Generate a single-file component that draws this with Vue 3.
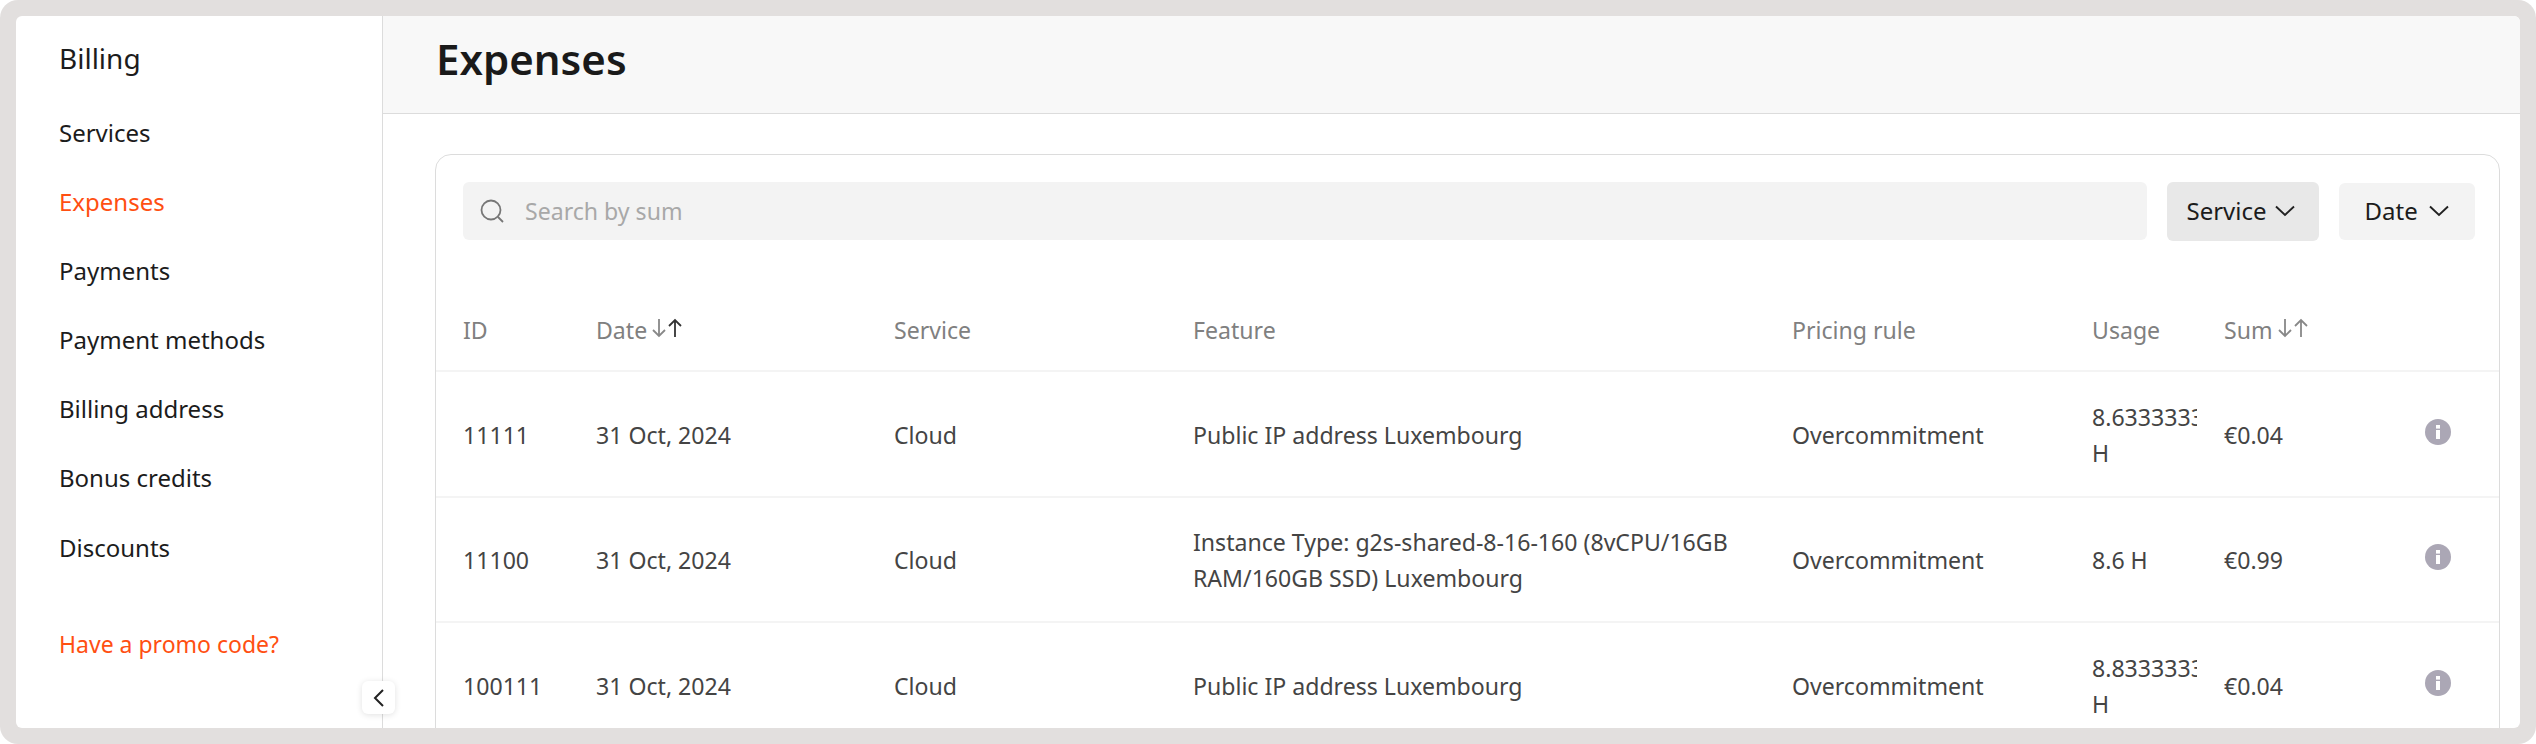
<template>
  <div class="frame">
    <div class="window">
      <aside class="sidebar">
        <div class="side-title">Billing</div>
        <nav class="side-nav">
          <a
            v-for="item in navItems"
            :key="item"
            class="side-link"
            :class="{ active: item === 'Expenses' }"
          >{{ item }}</a>
        </nav>
        <a class="promo">Have a promo code?</a>
        <button class="collapse">
          <svg width="12" height="18" viewBox="0 0 12 18" fill="none" stroke="#222" stroke-width="2">
            <polyline points="10 1 2 9 10 17"></polyline>
          </svg>
        </button>
      </aside>

      <main class="main">
        <header class="page-head">
          <h1>Expenses</h1>
        </header>
        <div class="content">
          <section class="card">
            <div class="toolbar">
              <div class="search">
                <svg width="24" height="24" viewBox="0 0 24 24" fill="none" stroke="#777" stroke-width="1.8">
                  <circle cx="11" cy="11" r="9.5"></circle>
                  <line x1="18" y1="18" x2="23" y2="23"></line>
                </svg>
                <span class="placeholder">Search by sum</span>
              </div>
              <button class="filter open">
                Service
                <svg width="20" height="12" viewBox="0 0 20 12" fill="none" stroke="#222" stroke-width="1.9">
                  <polyline points="1 1.5 10 10 19 1.5"></polyline>
                </svg>
              </button>
              <button class="filter date">
                Date
                <svg width="20" height="12" viewBox="0 0 20 12" fill="none" stroke="#222" stroke-width="1.9">
                  <polyline points="1 1.5 10 10 19 1.5"></polyline>
                </svg>
              </button>
            </div>

            <div class="row head-row">
              <div v-for="col in columns" :key="col.label" class="cell">
                {{ col.label }}
                <svg v-if="col.sort" class="sort" width="30" height="20" viewBox="0 0 30 20" fill="none" stroke-width="1.8">
                  <path d="M7 1v17M1 12l6 6 6-6" stroke="#888"></path>
                  <path d="M23 19V2M17 8l6-6 6 6" :stroke="col.sort === 'up' ? '#333' : '#888'"></path>
                </svg>
              </div>
              <div class="cell"></div>
            </div>

            <div v-for="row in rows" :key="row.id" class="row body-row">
              <div class="cell">{{ row.id }}</div>
              <div class="cell">31 Oct, 2024</div>
              <div class="cell">Cloud</div>
              <div class="cell feature">{{ row.feature }}</div>
              <div class="cell">Overcommitment</div>
              <div class="cell usage">{{ row.usage }}</div>
              <div class="cell">{{ row.sum }}</div>
              <div class="cell info-cell">
                <svg width="26" height="26" viewBox="0 0 26 26">
                  <circle cx="13" cy="13" r="13" fill="#aba7b5"></circle>
                  <rect x="11" y="11" width="4" height="9" fill="#fff"></rect>
                  <rect x="11" y="6" width="4" height="3.6" fill="#fff"></rect>
                </svg>
              </div>
            </div>
          </section>
        </div>
      </main>
    </div>
  </div>
</template>

<script setup>
const navItems = [
  'Services',
  'Expenses',
  'Payments',
  'Payment methods',
  'Billing address',
  'Bonus credits',
  'Discounts'
]

const columns = [
  { label: 'ID' },
  { label: 'Date', sort: 'up' },
  { label: 'Service' },
  { label: 'Feature' },
  { label: 'Pricing rule' },
  { label: 'Usage' },
  { label: 'Sum', sort: 'none' }
]

const rows = [
  { id: '11111', feature: 'Public IP address Luxembourg', usage: '8.63333333333 H', sum: '€0.04' },
  { id: '11100', feature: 'Instance Type: g2s-shared-8-16-160 (8vCPU/16GB RAM/160GB SSD) Luxembourg', usage: '8.6 H', sum: '€0.99' },
  { id: '100111', feature: 'Public IP address Luxembourg', usage: '8.83333333333 H', sum: '€0.04' }
]
</script>

<style>
html,
body {
  margin: 0;
  background: #fff;
}
</style>

<style scoped>
.frame {
  width: 2536px;
  height: 744px;
  box-sizing: border-box;
  padding: 16px;
  background: #e2dfde;
  border-radius: 18px;
  font-family: "Noto Sans", sans-serif;
  font-size: 24px;
  line-height: 36px;
}

.window {
  display: flex;
  height: 712px;
  background: #fff;
  border-radius: 6px;
  overflow: hidden;
}

/* sidebar */
.sidebar {
  position: relative;
  flex: 0 0 367px;
  box-sizing: border-box;
  padding: 22px 0 0 43px;
  border-right: 1px solid #dcdcdc;
  color: #1c1c1c;
}

.side-title {
  font-size: 28px;
  line-height: 40px;
}

.side-nav {
  display: flex;
  flex-direction: column;
  margin-top: 36.5px;
}

.side-link {
  height: 69.2px;
  line-height: 36px;
}

.side-link.active {
  color: #ff4f12;
}

.promo {
  display: block;
  margin-top: 27px;
  font-size: 23px;
  color: #ff4f12;
}

.collapse {
  position: absolute;
  right: -13px;
  top: 665px;
  width: 33px;
  height: 33px;
  padding: 0;
  display: flex;
  align-items: center;
  justify-content: center;
  border: none;
  border-radius: 6px;
  background: #fff;
  box-shadow: 0 1px 6px rgba(0, 0, 0, 0.12);
}

/* main */
.main {
  flex: 1;
  min-width: 0;
}

.page-head {
  box-sizing: border-box;
  height: 98px;
  padding: 13px 0 0 53px;
  background: #f8f8f8;
  border-bottom: 1px solid #dcdcdc;
}

.page-head h1 {
  margin: 0;
  font-size: 42px;
  line-height: 60px;
  font-weight: 600;
  color: #1a1a1a;
}

.content {
  padding: 40px 20px 0 52px;
}

.card {
  border: 1.5px solid #dcdcdc;
  border-radius: 16px;
  font-size: 23.1px;
}

.toolbar {
  display: flex;
  align-items: center;
  gap: 20px;
  padding: 26.5px 24px 0 27px;
}

.search {
  flex: 1;
  height: 58px;
  display: flex;
  align-items: center;
  gap: 21px;
  padding-left: 17px;
  background: #f3f3f3;
  border-radius: 6px;
}

.placeholder {
  color: #a8a8a8;
}

.filter {
  display: flex;
  align-items: center;
  justify-content: space-between;
  box-sizing: border-box;
  height: 59px;
  width: 152px;
  padding: 0 24px 0 20px;
  border: none;
  border-radius: 6px;
  font: inherit;
  font-size: 24px;
  color: #1c1c1c;
  background: #e8e8e8;
}

.filter.date {
  height: 57px;
  width: 136.5px;
  padding: 0 26px;
  background: #f3f3f3;
}

.row {
  display: grid;
  grid-template-columns: 133px 298px 299px 599px 300px 132px 132px 1fr;
  padding-left: 27px;
  box-sizing: border-box;
  border-bottom: 2px solid #f4f4f4;
  align-items: center;
}

.head-row {
  height: 131.5px;
  padding-top: 50px;
  color: #808080;
}

.body-row {
  height: 125.5px;
  padding-top: 2px;
  color: #444;
}

.cell {
  min-width: 0;
}

.head-row .cell {
  display: flex;
  align-items: center;
  gap: 5px;
  height: 40px;
}

.sort {
  margin-top: -5px;
}

.feature {
  padding-right: 40px;
}

.usage {
  overflow: hidden;
  width: 105px;
}

.info-cell {
  display: flex;
  justify-content: flex-end;
  padding-right: 48px;
  margin-top: -6px;
}
</style>
